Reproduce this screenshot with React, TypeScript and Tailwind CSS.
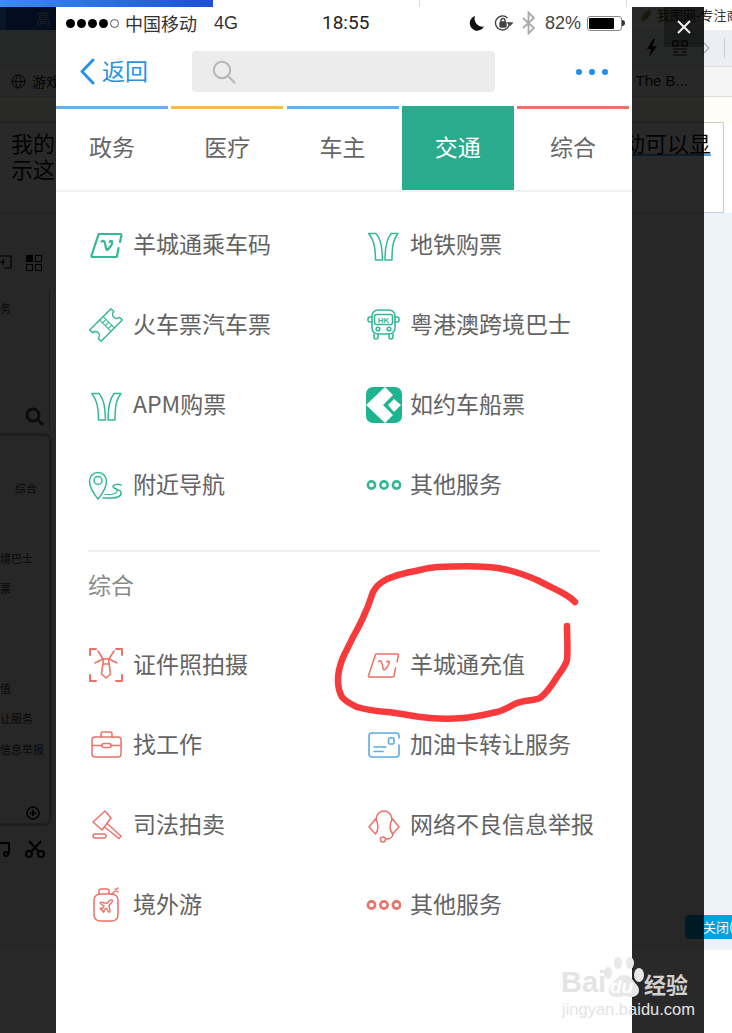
import React from 'react';

const CJK = '"Noto Sans CJK SC", "Liberation Sans", sans-serif';

interface IconProps {
  children: React.ReactNode;
  stroke?: number;
}

// Shared 36x36 box for the service icons
const Ico: React.FC<IconProps> = ({ children, stroke = 1.6 }) => (
  <svg width="36" height="36" viewBox="0 0 36 36" fill="none" stroke="currentColor" strokeWidth={stroke} strokeLinecap="round" strokeLinejoin="round">
    {children}
  </svg>
);

const VCard = ({ thin }: { thin?: boolean }) => (
  <Ico stroke={thin ? 1.5 : 2.2}>
    <path d="M32 15L33.5 8a1 1 0 0 0-1-1H11.5a1 1 0 0 0-1 .7L3.5 28.5a1 1 0 0 0 1 1.5H28a1 1 0 0 0 1-.8L30.5 21" />
    <path d="M13.5 14.5c2.5-2 3.5 1 4 4 .3 2 .5 4 1.5 4.5 2-1 5.2-5 5.2-8 0-1.5-2-1.5-2.5 0" />
  </Ico>
);

const Metro = () => (
  <Ico stroke={1.5}>
    <path d="M3.7 6.5H11C15 11 17 17 17.5 33H10.5C10.5 18 8 12 3.7 6.5Z" />
    <path d="M33 6.5H26C22.5 11 20 17 20 33H27C27 18 28.5 12 33 6.5Z" />
  </Ico>
);

const Ticket = () => (
  <Ico stroke={1.5}>
    <g transform="rotate(-45 18 18)">
      <path d="M3 10H33V14a4 4 0 0 0 0 8V26H3V22a4 4 0 0 0 0-8Z" />
      <path d="M17 10V26M22 10V26M17 14H22M17 18H22M17 22H22" strokeWidth="1.1" />
    </g>
  </Ico>
);

const Bus = () => (
  <Ico stroke={1.6}>
    <rect x="7" y="3" width="23" height="24" rx="6" />
    <rect x="9.5" y="7.5" width="18" height="10" rx="2" />
    <text x="18.5" y="15.5" textAnchor="middle" fontSize="8" fontWeight="700" fill="currentColor" stroke="none" fontFamily="Liberation Sans, sans-serif">HK</text>
    <path d="M7 10H5a2 2 0 0 0-2 2v1a2 2 0 0 0 2 2h2M30 10h2a2 2 0 0 1 2 2v1a2 2 0 0 1-2 2h-2" />
    <circle cx="13" cy="22" r="1.8" />
    <circle cx="24" cy="22" r="1.8" />
    <path d="M9 27v3a2 2 0 0 0 4 0v-3M24 27v3a2 2 0 0 0 4 0v-3" />
  </Ico>
);

const RideLogo = () => (
  <svg width="38" height="38" viewBox="0 0 38 38">
    <rect x="1" y="1" width="36" height="36" rx="7" fill="#1db58f" />
    <path d="M1 19L20 1L28 9L18 19L28 29L20 37Z" fill="#fff" />
    <path d="M23 19L29 13L36 19L29 26Z" fill="#fff" />
  </svg>
);

const Pin = () => (
  <Ico stroke={1.5}>
    <path d="M10 32C5 26 1.5 20 1.5 14a8.5 8.5 0 0 1 17 0C18.5 20 15 26 10 32Z" />
    <circle cx="10" cy="13.5" r="4" />
    <path d="M33 18c-3-1-7-1-8 1-1 3 7 3 8 6 1 4-3 6-10 6h-8" />
    <path d="M28 22.5c2 1 2 4-5 5h-6" strokeWidth="1.2" />
  </Ico>
);

const Dots = () => (
  <Ico stroke={2.6}>
    <circle cx="6.5" cy="18" r="3.6" />
    <circle cx="19" cy="18" r="3.6" />
    <circle cx="31.5" cy="18" r="3.6" />
  </Ico>
);

const TieFrame = () => (
  <Ico stroke={1.6}>
    <path d="M2 8V2H8M28 2H34V8M2 28V34H8M28 34H34V28" strokeWidth="2" />
    <path d="M10 4L15 12H21L26 4M7 16L15 12M29 16L21 12" />
    <path d="M15.5 12L13.5 27L18 31L22.5 27L20.5 12" />
    <path d="M15.5 17H20.5" />
  </Ico>
);

const Briefcase = () => (
  <Ico stroke={1.5}>
    <rect x="4" y="10" width="29" height="20" rx="3" />
    <path d="M13 10V7a2 2 0 0 1 2-2h7a2 2 0 0 1 2 2v3" />
    <path d="M4 18.5H14M23 18.5H33" />
    <rect x="14" y="16.5" width="9" height="4" rx="2" />
  </Ico>
);

const Gavel = () => (
  <Ico stroke={1.5}>
    <path d="M17 4L23 11L14 23L5 15Z" />
    <path d="M19 16.5L33 29L31 31.5L16.5 20" />
    <rect x="5" y="27" width="13" height="4" rx="2" />
  </Ico>
);

const Luggage = () => (
  <Ico stroke={1.5}>
    <rect x="6" y="7" width="24" height="27" rx="6" />
    <path d="M11 7V4a2 2 0 0 1 2-2h6a2 2 0 0 1 2 2v3" />
    <path d="M24 7L30 1M27 2L30 5" />
    <g transform="translate(10 11) scale(.68)">
      <path d="M17.8 19.2 16 11l3.5-3.5C21 6 21.5 4 21 3c-1-.5-3 0-4.5 1.5L13 8 4.8 6.2c-.5-.1-.9.1-1.1.5l-.3.5c-.2.5-.1 1 .3 1.3L9 12l-2 3H4l-1 1 3 2 2 3 1-1v-3l3-2 3.5 5.3c.3.4.8.5 1.3.3l.5-.2c.4-.3.6-.7.5-1.2z" strokeWidth="2" />
    </g>
  </Ico>
);

const Card = () => (
  <Ico stroke={1.6}>
    <path d="M34 18V27a3 3 0 0 1-3 3H7a3 3 0 0 1-3-3V9a3 3 0 0 1 3-3H31a3 3 0 0 1 3 3V11" />
    <rect x="23.5" y="11" width="5.5" height="6" rx="1" />
    <path d="M9 20H21M9 24.5H18" />
  </Ico>
);

const Headset = () => (
  <Ico stroke={1.5}>
    <path d="M11 13C11 1 27 1 27 13" />
    <path d="M10.5 12L4 20L10.5 27C12 25 13 22 13 20C13 17 12 14 10.5 12Z" />
    <path d="M27.5 12L34 20L27.5 27C26 25 25 22 25 20C25 17 26 14 27.5 12Z" />
    <path d="M28 27C28 30 25 32 21 32" />
    <circle cx="18" cy="32.5" r="2.5" />
  </Ico>
);

interface Item {
  label: string;
  icon: React.ReactNode;
  color: string;
}

const green = 'text-[#35b899]';
const red = 'text-[#ea7268]';
const blue = 'text-[#5cabe6]';

const transit: Item[] = [
  { label: '羊城通乘车码', icon: <VCard />, color: green },
  { label: '地铁购票', icon: <Metro />, color: green },
  { label: '火车票汽车票', icon: <Ticket />, color: green },
  { label: '粤港澳跨境巴士', icon: <Bus />, color: green },
  { label: 'APM购票', icon: <Metro />, color: green },
  { label: '如约车船票', icon: <RideLogo />, color: green },
  { label: '附近导航', icon: <Pin />, color: green },
  { label: '其他服务', icon: <Dots />, color: green },
];

const general: Item[] = [
  { label: '证件照拍摄', icon: <TieFrame />, color: red },
  { label: '羊城通充值', icon: <VCard thin />, color: red },
  { label: '找工作', icon: <Briefcase />, color: red },
  { label: '加油卡转让服务', icon: <Card />, color: blue },
  { label: '司法拍卖', icon: <Gavel />, color: red },
  { label: '网络不良信息举报', icon: <Headset />, color: red },
  { label: '境外游', icon: <Luggage />, color: red },
  { label: '其他服务', icon: <Dots />, color: red },
];

const tabs = [
  { label: '政务', bar: 'bg-[#68ade5]' },
  { label: '医疗', bar: 'bg-[#f2bb4e]' },
  { label: '车主', bar: 'bg-[#68ade5]' },
  { label: '交通', bar: 'bg-[#2bab8e]', active: true },
  { label: '综合', bar: 'bg-[#e8736b]' },
];

const ServiceGrid = ({ items }: { items: Item[] }) => (
  <div className="grid grid-cols-[277px_1fr] pl-8">
    {items.map((item, i) => (
      <div key={i} className="flex h-20 items-center">
        <div className={`flex w-[46px] shrink-0 ${item.color}`}>{item.icon}</div>
        <span className="-ml-px whitespace-nowrap pb-1 text-[23px] leading-8 text-[#636363]">{item.label}</span>
      </div>
    ))}
  </div>
);

const StatusBar = () => (
  <div className="flex h-8 items-center pl-[10px] pr-[7px] text-[#333]">
    <div className="flex w-[256px] items-center">
      <div className="flex w-[59px] items-center gap-[2px]">
        {[0, 1, 2, 3].map(i => (
          <span key={i} className="h-[9px] w-[9px] rounded-full bg-black" />
        ))}
        <span className="h-[9px] w-[9px] rounded-full border border-[#555]" />
      </div>
      <span className="text-[18px] leading-6">中国移动</span>
      <span className="ml-[17px] text-[18px] leading-6" style={{ fontFamily: '"Liberation Sans", sans-serif' }}>4G</span>
    </div>
    <span className="w-[52px] whitespace-nowrap text-[19px] font-normal leading-6 text-[#222]" style={{ fontFamily: 'Roboto, sans-serif' }}>18:55</span>
    <div className="flex flex-1 items-center justify-end">
      <svg width="16" height="17" viewBox="0 0 16 17">
        <path d="M6 1a7.5 7.5 0 1 0 9 10.5A8 8 0 0 1 6 1Z" fill="#111" />
      </svg>
      <svg className="ml-[9px]" width="19" height="18" viewBox="0 0 19 18" fill="none" stroke="#444" strokeWidth="1.4">
        <path d="M15.5 9a7 7 0 1 1-2-5" />
        <path d="M14 9h4l-2 2.2Z" fill="#444" />
        <rect x="6" y="8" width="6" height="5" rx="1" fill="#444" />
        <path d="M7 8V6.5a2 2 0 0 1 4 0V8" />
      </svg>
      <svg className="ml-[9px]" width="13" height="24" viewBox="0 0 13 24" fill="none" stroke="#aaa" strokeWidth="1.8">
        <path d="M1 7l11 10-5.5 5.5V1.5L12 7 1 17" />
      </svg>
      <span className="ml-[10px] text-[18px] leading-6 text-[#444]" style={{ fontFamily: '"Liberation Sans", sans-serif' }}>82%</span>
      <div className="ml-[6px] flex items-center">
        <div className="flex h-[15px] w-[35px] rounded-[3px] border border-[#888] p-[1px]">
          <div className="h-full w-[82%] rounded-[1px] bg-black" />
        </div>
        <div className="h-[6px] w-[3px] rounded-r-sm bg-[#333]" />
      </div>
    </div>
  </div>
);

const NavBar = () => (
  <div className="mb-[2px] flex h-[65px] items-center pl-[23px] pr-6">
    <svg width="16" height="27" viewBox="0 0 16 27" fill="none" stroke="#2a93e0" strokeWidth="3" strokeLinecap="round" strokeLinejoin="round">
      <path d="M14 2L3 13.5L14 25" />
    </svg>
    <span className="ml-[7px] pb-1 text-[23px] leading-8 text-[#2a93e0]">返回</span>
    <div className="ml-11 flex h-[41px] w-[303px] items-center rounded bg-[#ececec] pl-5">
      <svg width="24" height="24" viewBox="0 0 24 24" fill="none" stroke="#b5b5b5" strokeWidth="2" strokeLinecap="round">
        <circle cx="10" cy="10" r="8.2" />
        <path d="M16 16l6.5 6.5" />
      </svg>
    </div>
    <div className="ml-auto flex gap-[7px]">
      <span className="h-[6px] w-[6px] rounded-full bg-[#1e8fe8]" />
      <span className="h-[6px] w-[6px] rounded-full bg-[#1e8fe8]" />
      <span className="h-[6px] w-[6px] rounded-full bg-[#1e8fe8]" />
    </div>
  </div>
);

const Tabs = () => (
  <div className="flex h-[86px] gap-[3.25px] border-b-2 border-[#f2f2f2] pr-[3px]">
    {tabs.map(tab => (
      <div key={tab.label} className={`flex h-[84px] w-[112px] flex-col ${tab.active ? 'bg-[#2bab8e] text-white' : 'text-[#666]'}`}>
        <div className={`h-[3px] ${tab.bar}`} />
        <div className="flex flex-1 items-center justify-center pb-[6px] text-[23px]">{tab.label}</div>
      </div>
    ))}
  </div>
);

// Marker scribble around the recharge row
const Scribble = () => (
  <svg className="absolute left-0 top-0" width="732" height="1033" fill="none" stroke="#f93a3c" strokeWidth="6.5" strokeLinecap="round" strokeLinejoin="round">
    <path d="M575 602C568 594 556 590 537 580C525 575 515 571 503 569C490 566 460 566 437 567C425 568 418 571 410 572C400 574 394 576 387 579C378 584 376 587 373 592C370 600 369 605 365 613C361 623 358 628 353 637C348 648 345 652 342 660C339 668 338 672 338 680C338 688 339 692 342 697C346 702 351 704 357 707C366 710 375 711 387 712C400 713 415 717 430 718C442 719 452 719 463 718C475 717 487 714 497 712C505 710 510 706 517 703C525 700 533 701 540 698C548 692 552 685 557 677C562 670 566 665 567 660C568 650 567 638 567 626" />
  </svg>
);

const Watermark = () => (
  <div className="absolute left-[558px] top-[950px] h-[70px] w-[136px] text-[#e4e4e4]">
    <span className="absolute left-[3px] top-[16px] text-[29px] font-bold leading-8" style={{ fontFamily: '"Liberation Sans", sans-serif' }}>Bai</span>
    <svg className="absolute left-[44px] top-[3px]" width="44" height="50" viewBox="0 0 44 50" fill="#e8e8e8">
      <ellipse cx="6" cy="20" rx="4" ry="6" />
      <ellipse cx="16" cy="10" rx="4" ry="6" />
      <ellipse cx="28" cy="10" rx="4" ry="6" />
      <ellipse cx="37" cy="22" rx="5" ry="7" />
      <path d="M22 22c7 0 9 6 13 10 4 5 2 12-6 12-3 0-5-1-7-1s-5 2-9 1c-7-1-8-8-4-12 5-4 6-10 13-10Z" />
    </svg>
    <span className="absolute left-[52px] top-[27px] text-[19px] font-bold italic leading-5 text-white" style={{ fontFamily: '"Liberation Sans", sans-serif' }}>du</span>
    <span className="absolute left-[86px] top-[19px] text-[22px] font-bold leading-7 text-[#d0d0d0]">经验</span>
    <span className="absolute left-[4px] top-[49px] whitespace-nowrap text-[16.5px] leading-5" style={{ fontFamily: '"Liberation Sans", sans-serif' }}>jingyan.baidu.com</span>
  </div>
);

// The dimmed editor page behind the popup
const BackgroundPage = () => (
  <div className="flex h-full flex-col text-[#111]">
    <div className="flex h-[30px] bg-white">
      <div className="h-full w-[213px] shrink-0 bg-gradient-to-r from-[#3a8cf0] to-[#1d4fd6] pl-[6px]">
        <div className="mt-[7px] flex h-[23px] w-[50px] items-center bg-[#1552c0] pl-[30px] text-[14px] text-[#bbb]">高</div>
      </div>
      <div className="h-full w-[207px] shrink-0 border-r border-[#ddd]" />
      <div className="h-full w-[207px] shrink-0 border-r border-[#ddd]" />
      <svg className="ml-[13px] mt-[9px] shrink-0" width="12" height="13" viewBox="0 0 12 13">
        <path d="M1 12C1 5 6 1 11 1C11 7 7 12 1 12Z" fill="#7fae3a" />
      </svg>
      <span className="ml-[5px] whitespace-nowrap pt-[5px] text-[13px] leading-5 text-[#333]">我图网-专注商</span>
    </div>
    <div className="flex h-9 shrink-0 items-center gap-[14px] bg-[#eceef3] pl-[646px] text-[#444]">
      <svg width="12" height="18" viewBox="0 0 12 18" fill="#111">
        <path d="M7 0L1 10h4L3 18l8-11H6.5L9 0Z" />
      </svg>
      <svg width="16" height="16" viewBox="0 0 16 16" fill="none" stroke="#111" strokeWidth="1.2">
        <rect x="1" y="1" width="5" height="5" />
        <rect x="10" y="1" width="5" height="5" />
        <path d="M1 9h14M1 12h5M10 12h5M1 15h14" />
      </svg>
      <svg width="8" height="14" viewBox="0 0 8 14" fill="none" stroke="#aaa" strokeWidth="1.2">
        <path d="M1 1l6 6-6 6" />
      </svg>
      <div className="h-5 w-px bg-[#ccc]" />
    </div>
    <div className="flex h-[30px] shrink-0 items-center border-t border-[#ddd] bg-[#f5f5f5] pl-[11px]">
      <svg width="15" height="15" viewBox="0 0 16 16" fill="none" stroke="#111">
        <circle cx="8" cy="8" r="7" />
        <path d="M1 8h14M8 1c-4 4-4 10 0 14M8 1c4 4 4 10 0 14" />
      </svg>
      <span className="ml-[6px] text-[14px]">游戏</span>
      <span className="ml-auto mr-[44px] text-[15px]" style={{ fontFamily: '"Liberation Sans", sans-serif' }}>| The B...</span>
    </div>
    <div className="h-[26px] shrink-0 border-t border-[#ddd] bg-[#fffdf5]" />
    <div className="mr-[8px] h-[91px] shrink-0 border-y border-r border-[#ccc] bg-white pl-[11px] pr-3 text-[22px] leading-[26px]">
      <div className="mt-[6px] flex justify-between">
        <span>我的屏</span>
        <span className="underline decoration-[#5aa9e6]">动可以显</span>
      </div>
      <div>示这个</div>
    </div>
    <div className="relative flex-1 bg-[#eef3f8]">
      <div className="flex w-[56px] flex-col pt-[42px] text-[11px] text-[#333]">
        <div className="flex items-center gap-[14px]">
          <svg width="12" height="16" viewBox="0 0 12 16" fill="none" stroke="#000" strokeWidth="1.2">
            <path d="M0 1h11v12H4M5 7H0M3 4v6" />
          </svg>
          <div className="grid grid-cols-2 gap-[2px]">
            <span className="h-[7px] w-[7px] bg-black" />
            <span className="h-[7px] w-[7px] border border-black" />
            <span className="h-[7px] w-[7px] border border-black" />
            <span className="h-[7px] w-[7px] border border-black" />
          </div>
        </div>
        <div className="mt-[19px] flex h-[140px] w-[50px] flex-col border-r border-[#aaa] pt-[10px]">
          <span>务</span>
          <svg className="ml-auto mr-[4px] mt-auto mb-[3px]" width="20" height="20" viewBox="0 0 20 20" fill="none" stroke="#444" strokeWidth="3">
            <circle cx="8" cy="8" r="6" />
            <path d="M12 12l6 6" />
          </svg>
        </div>
        <div className="mt-[3px] h-[393px] w-[52px] rounded-r-lg border-[3px] border-l-0 border-[#bbb] pt-[41px]">
          <div className="mt-[3px] flex justify-end pr-3">综合</div>
          <div className="mt-[53px]">境巴士</div>
          <div className="mt-[14px]">票</div>
          <div className="mt-[83px]">值</div>
          <div className="mt-[14px]">让服务</div>
          <div className="mt-[14px] whitespace-nowrap">信息举报</div>
          <svg className="ml-auto mr-2 mt-[48px]" width="16" height="16" viewBox="0 0 16 16" fill="none" stroke="#000" strokeWidth="1.6">
            <circle cx="8" cy="8" r="6" />
            <path d="M5 8h6M8 5v6" />
          </svg>
        </div>
        <div className="mt-[14px] flex items-center gap-[15px]">
          <svg width="10" height="16" viewBox="0 0 10 16" fill="none" stroke="#000" strokeWidth="2">
            <path d="M0 2h9v11" />
            <circle cx="6" cy="13" r="2" />
          </svg>
          <svg width="20" height="18" viewBox="0 0 20 18" fill="none" stroke="#000" strokeWidth="2">
            <circle cx="4" cy="14" r="3" />
            <circle cx="16" cy="14" r="3" />
            <path d="M6 12L16 1M14 12L4 1" />
          </svg>
        </div>
      </div>
      <div className="absolute bottom-[11px] right-0 flex h-6 w-[47px] items-center overflow-hidden whitespace-nowrap rounded-l-sm bg-[#00a0e4] pl-[18px] text-[13px] text-white">关闭(</div>
    </div>
    <div className="h-[83px] shrink-0 bg-white" />
  </div>
);

export default function App() {
  return (
    <div className="relative h-[1033px] w-[732px] overflow-hidden bg-white" style={{ fontFamily: CJK }}>
      <BackgroundPage />
      <div className="absolute bottom-0 left-0 top-[7px] w-[704px] bg-black/[0.84]">
        <div className="ml-14 flex h-full w-[576px] flex-col bg-white">
          <StatusBar />
          <NavBar />
          <Tabs />
          <div className="pt-[13px]">
            <ServiceGrid items={transit} />
          </div>
          <div className="mx-8 mt-[25px] h-[2px] bg-[#f0f0f0]" />
          <div className="pl-8 pt-[18px] text-[23px] leading-7 text-[#8a8a8a]">综合</div>
          <div className="mt-[27px]">
            <ServiceGrid items={general} />
          </div>
        </div>
        <div className="absolute right-0 top-0 flex h-10 w-10 items-center justify-center bg-black/30">
          <svg width="16" height="16" viewBox="0 0 16 16" stroke="#f2f2f2" strokeWidth="2">
            <path d="M2 2l12 12M14 2L2 14" />
          </svg>
        </div>
      </div>
      <Scribble />
      <Watermark />
    </div>
  );
}
